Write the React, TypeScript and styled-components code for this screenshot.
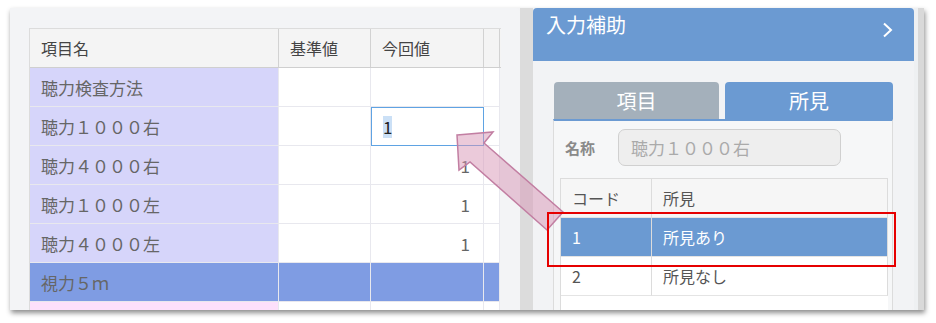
import styled, { createGlobalStyle } from "styled-components";

const GlobalStyle = createGlobalStyle`
    html, body {
        margin: 0;
        padding: 0;
        background: #ffffff;
    }
    body {
        font-family: "Noto Sans CJK JP", "Noto Sans", sans-serif;
        color: #555;
    }
`;

type Tone = 'name' | 'plain' | 'group' | 'pink';

interface Item {
    name: string;
    base?: string;
    value?: string;
    editing?: boolean;
    tone?: 'group' | 'pink';
}

const items: Item[] = [
    { name: '聴力検査方法' },
    { name: '聴力１０００右', value: '1', editing: true },
    { name: '聴力４０００右', value: '1' },
    { name: '聴力１０００左', value: '1' },
    { name: '聴力４０００左', value: '1' },
    { name: '視力５ｍ', tone: 'group' },
    { name: '', tone: 'pink' },
];

const findings = [
    { code: '1', label: '所見あり', selected: true },
    { code: '2', label: '所見なし', selected: false },
];

const cellBg = (tone: Tone) => {
    if (tone === 'name') return '#d6d5fa';
    if (tone === 'group') return '#7f9ce3';
    if (tone === 'pink') return '#fde0fb';
    return '#ffffff';
};

export default function App() {
    return (
        <>
            <GlobalStyle />
            <PageStl>
                <FrameStl>
                    {/* 左：検査項目テーブル */}
                    <LeftStl>
                        <GridStl>
                            <HeadRowStl>
                                <HeadCellStl>項目名</HeadCellStl>
                                <HeadCellStl>基準値</HeadCellStl>
                                <HeadCellStl>今回値</HeadCellStl>
                                <HeadCellStl />
                            </HeadRowStl>
                            {items.map((it, i) => {
                                const nameTone: Tone = it.tone ?? 'name';
                                const restTone: Tone = it.tone === 'group' ? 'group' : 'plain';
                                return (
                                    <RowStl key={i}>
                                        <CellStl $tone={nameTone}>{it.name}</CellStl>
                                        <CellStl $tone={restTone}>{it.base}</CellStl>
                                        {it.editing ? (
                                            <EditCellStl>
                                                <SelectedStl>{it.value}</SelectedStl>
                                            </EditCellStl>
                                        ) : (
                                            <CellStl $tone={restTone} $right>{it.value}</CellStl>
                                        )}
                                        <CellStl $tone={restTone} />
                                    </RowStl>
                                );
                            })}
                        </GridStl>
                    </LeftStl>

                    <SplitterStl />

                    {/* 右：入力補助 */}
                    <RightStl>
                        <HeaderStl>
                            <span>入力補助</span>
                            <ChevronStl viewBox="0 0 12 16" width="12" height="16">
                                <polyline points="2,1.5 9,8 2,14.5" fill="none" stroke="#fff" strokeWidth="2" />
                            </ChevronStl>
                        </HeaderStl>
                        <BodyStl>
                            <TabsStl>
                                <TabStl $active={false} $w={165}>項目</TabStl>
                                <TabStl $active $w={168}>所見</TabStl>
                            </TabsStl>
                            <TabPanelStl>
                                <NameRowStl>
                                    <LabelStl>名称</LabelStl>
                                    <NameInputStl>聴力１０００右</NameInputStl>
                                </NameRowStl>
                                <FindTableStl>
                                    <FindRowStl $head>
                                        <FindCellStl>コード</FindCellStl>
                                        <FindCellStl>所見</FindCellStl>
                                    </FindRowStl>
                                    {findings.map((f) => (
                                        <FindRowStl key={f.code} $selected={f.selected}>
                                            <FindCellStl>{f.code}</FindCellStl>
                                            <FindCellStl>{f.label}</FindCellStl>
                                        </FindRowStl>
                                    ))}
                                    <FindRowStl />
                                </FindTableStl>
                            </TabPanelStl>
                        </BodyStl>
                    </RightStl>
                    <ScrollStl />
                </FrameStl>

                {/* 注釈（矢印と赤枠） */}
                <OverlayStl width="936" height="323" viewBox="0 0 936 323">
                    <polygon
                        points="457,135 493,132 484,143 563,212 547,230 470,162 459,170"
                        fill="rgba(215,150,182,0.5)"
                        stroke="#c27ea2"
                        strokeWidth="1.5"
                        strokeLinejoin="miter"
                    />
                    <rect x="548" y="213" width="347" height="53" fill="none" stroke="#e60000" strokeWidth="2" />
                </OverlayStl>
            </PageStl>
        </>
    );
}

const PageStl = styled.div`
    position: relative;
    width: 936px;
    height: 323px;
    padding: 8px 0 0 10px;
    box-sizing: border-box;
`;

const FrameStl = styled.div`
    display: flex;
    width: 914px;
    height: 302px;
    overflow: hidden;
    background: #f2f3f5;
    box-shadow: 1px 3px 5px rgba(0, 0, 0, 0.45);
`;

const LeftStl = styled.div`
    width: 510px;
    flex-shrink: 0;
    box-sizing: border-box;
    padding: 20px 0 0 19px;
    background: #f3f4f6;
    border-top-right-radius: 5px;
`;

const GridStl = styled.div`
    width: 471px;
    border-top: 1px solid #dcdcdc;
    border-left: 1px solid #dcdcdc;
`;

const HeadRowStl = styled.div`
    display: grid;
    grid-template-columns: 249px 92px 113px 16px;
    height: 38px;
    border-bottom: 1px solid #cfcfcf;
    background: #f4f4f4;
`;

const HeadCellStl = styled.div`
    display: flex;
    align-items: center;
    padding-left: 11px;
    border-right: 1px solid #d2d2d2;
    font-size: 16px;
    color: #444;
`;

const RowStl = styled.div`
    display: grid;
    grid-template-columns: 249px 92px 113px 16px;
    height: 39px;
`;

const CellStl = styled.div<{ $tone: Tone; $right?: boolean }>`
    display: flex;
    align-items: center;
    justify-content: ${(p) => (p.$right ? 'flex-end' : 'flex-start')};
    padding: 0 ${(p) => (p.$right ? '13px' : '0')} 0 ${(p) => (p.$right ? '0' : '11px')};
    box-sizing: border-box;
    background: ${(p) => cellBg(p.$tone)};
    border-right: 1px solid #e8e8ee;
    border-bottom: 1px solid #e8e8ee;
    font-size: 17px;
    color: #666;
`;

const EditCellStl = styled.div`
    display: flex;
    align-items: center;
    padding-left: 11px;
    box-sizing: border-box;
    background: #fff;
    border: 1px solid #5fa3e3;
    font-size: 17px;
    color: #222;
`;

const SelectedStl = styled.span`
    background: #cbe0f6;
    line-height: 22px;
`;

const SplitterStl = styled.div`
    width: 13px;
    flex-shrink: 0;
    background: #dcdcdc;
`;

const RightStl = styled.div`
    width: 381px;
    flex-shrink: 0;
    display: flex;
    flex-direction: column;
    background: #f2f3f5;
`;

const ScrollStl = styled.div`
    width: 4px;
    flex-shrink: 0;
    background: #eef0f2;
    border-right: 6px solid #d9d9d9;
`;

const HeaderStl = styled.div`
    height: 53px;
    flex-shrink: 0;
    box-sizing: border-box;
    display: flex;
    justify-content: space-between;
    align-items: flex-start;
    padding: 2px 20px 0 13px;
    background: #6b9ad2;
    border-radius: 4px 4px 0 0;
    color: #fff;
    font-size: 20px;
`;

const ChevronStl = styled.svg`
    margin-top: 12px;
`;

const BodyStl = styled.div`
    flex-shrink: 0;
    padding: 21px 0 0 21px;
`;

const TabsStl = styled.div`
    display: flex;
    gap: 6px;
`;

const TabStl = styled.div<{ $active: boolean; $w: number }>`
    width: ${(p) => p.$w}px;
    height: 37px;
    display: flex;
    align-items: center;
    justify-content: center;
    border-radius: 4px 4px 0 0;
    background: ${(p) => (p.$active ? '#6b9ad2' : '#a4b0bb')};
    color: #fff;
    font-size: 20px;
`;

const TabPanelStl = styled.div`
    width: 340px;
    height: 200px;
    box-sizing: border-box;
    margin-left: -1px;
    border: 1px solid #dcdcdc;
    border-top: 2px solid #6b9ad2;
    background: #f6f7f8;
    padding: 8px 0 0 6px;
`;

const NameRowStl = styled.div`
    display: flex;
    align-items: center;
    gap: 23px;
    padding-left: 5px;
`;

const LabelStl = styled.span`
    font-size: 15px;
    font-weight: bold;
    color: #8a8a8a;
`;

const NameInputStl = styled.div`
    width: 223px;
    height: 37px;
    box-sizing: border-box;
    display: flex;
    align-items: center;
    padding-left: 12px;
    border: 1px solid #d0d0d0;
    border-radius: 7px;
    background: #eeeeee;
    color: #aaa;
    font-size: 17px;
`;

const FindTableStl = styled.div`
    width: 327px;
    margin-top: 12px;
    border-top: 1px solid #dcdcdc;
    border-left: 1px solid #dcdcdc;
    background: #fff;
`;

const FindRowStl = styled.div<{ $head?: boolean; $selected?: boolean }>`
    display: grid;
    grid-template-columns: 91px 236px;
    height: 39px;
    background: ${(p) => (p.$selected ? '#6b9ad2' : p.$head ? '#f6f6f6' : '#fff')};
    color: ${(p) => (p.$selected ? '#fff' : '#555')};
`;

const FindCellStl = styled.div`
    display: flex;
    align-items: center;
    padding-left: 11px;
    border-right: 1px solid #dcdcdc;
    border-bottom: 1px solid #e4e4e4;
    font-size: 16px;
`;

const OverlayStl = styled.svg`
    position: absolute;
    top: 0;
    left: 0;
    pointer-events: none;
`;
